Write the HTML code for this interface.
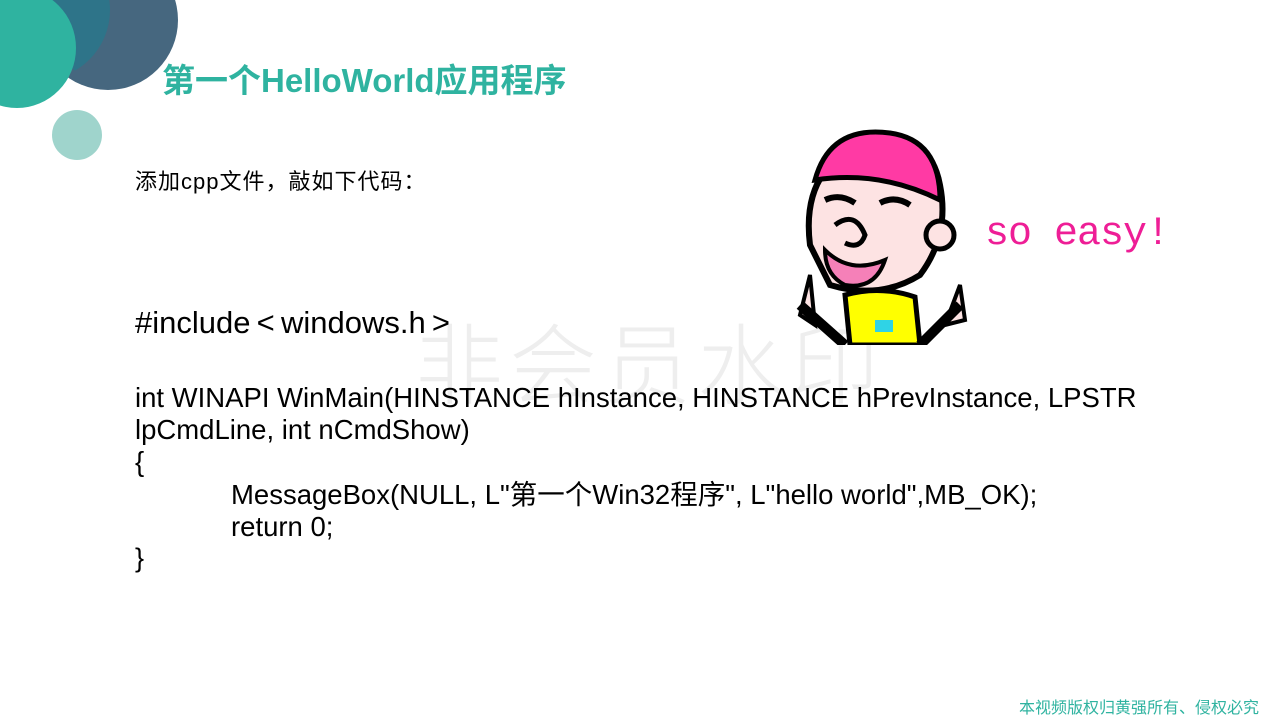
<!DOCTYPE html>
<html><head><meta charset="utf-8"><style>
body{margin:0;width:1280px;height:720px;background:#fff;position:relative;overflow:hidden;font-family:"Liberation Sans","Noto Sans CJK SC",sans-serif;}
.c{position:absolute;border-radius:50%;}
.t{position:absolute;white-space:nowrap;color:#000;}
</style></head><body>
<div class="c" style="left:38px;top:-50px;width:140px;height:140px;background:#46677f"></div>
<div class="c" style="left:-30px;top:-60px;width:140px;height:140px;background:#2e7489;clip-path:circle(70px at 140px 70px)"></div>
<div class="c" style="left:-42px;top:-12px;width:118px;height:120px;background:#2fb3a0"></div>
<div class="c" style="left:52px;top:110px;width:50px;height:50px;background:#9fd4cc"></div>
<div class="t" style="left:415px;top:296px;font-size:88px;color:#eeeeee;letter-spacing:6px;font-family:'Noto Sans CJK SC',sans-serif;font-weight:300">非会员水印</div>
<div class="t" style="left:162px;top:54px;font-size:33px;font-weight:bold;color:#2fb3a0">第一个HelloWorld应用程序</div>
<div class="t" style="left:135px;top:164px;font-size:22px;letter-spacing:1px">添加cpp文件，敲如下代码：</div>
<div class="t" style="left:135px;top:305px;font-size:31px">#include&thinsp;&lt;&thinsp;windows.h&thinsp;&gt;</div>
<div class="t" style="left:135px;top:382px;font-size:27.5px;line-height:32px">int WINAPI WinMain(HINSTANCE hInstance, HINSTANCE hPrevInstance, LPSTR<br>lpCmdLine, int nCmdShow)<br>{</div>
<div class="t" style="left:231px;top:479px;font-size:27.5px;line-height:32px">MessageBox(NULL, L"第一个Win32程序", L"hello world",MB_OK);<br>return 0;</div>
<div class="t" style="left:135px;top:543px;font-size:27px">}</div>
<div class="t" style="left:985px;top:212px;font-size:40px;color:#ee1e96;font-family:'Liberation Mono',monospace;letter-spacing:-1px">so easy!</div>
<svg style="position:absolute;left:770px;top:125px" width="230" height="220">
<path d="M40 120 Q30 40 100 15 Q160 5 170 60 Q180 110 150 150 Q110 175 60 160 Z" fill="#fde3e3" stroke="#000" stroke-width="6"/>
<path d="M45 55 Q60 0 120 8 Q170 15 170 75 Q110 45 45 55Z" fill="#ff3aa4" stroke="#000" stroke-width="5"/>
<circle cx="170" cy="110" r="14" fill="#fde3e3" stroke="#000" stroke-width="5"/>
<path d="M55 75 Q70 68 85 78 M110 78 Q125 70 140 80" stroke="#000" stroke-width="6" fill="none"/>
<path d="M65 100 Q85 85 95 110 Q90 125 75 118" stroke="#000" stroke-width="5" fill="none"/>
<path d="M55 125 Q80 150 115 135 Q105 165 75 160 Q55 150 55 125Z" fill="#f580b8" stroke="#000" stroke-width="4"/>
<path d="M75 170 Q110 160 145 172 L150 220 L80 220 Z" fill="#ffff00" stroke="#000" stroke-width="5"/>
<path d="M40 150 L45 200 L30 190 Z M190 160 L175 200 L195 195Z" fill="#fde3e3" stroke="#000" stroke-width="4"/>
<path d="M30 180 L75 220 M190 180 L150 220" stroke="#000" stroke-width="10"/>
<rect x="105" y="195" width="18" height="12" fill="#2fd3e6"/>
</svg>
<div class="t" style="left:1019px;top:694px;font-size:16px;color:#2fb3a0">本视频版权归黄强所有、侵权必究</div>
</body></html>
